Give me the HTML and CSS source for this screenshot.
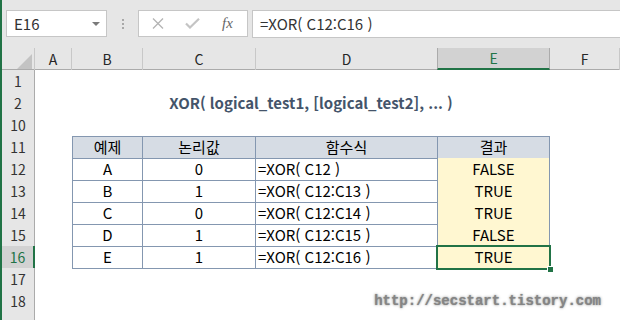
FILE: index.html
```html
<!DOCTYPE html>
<html lang="ko">
<head>
    <meta charset="UTF-8">
    <title>XOR 함수</title>
    <link rel="stylesheet" href="styles.css">
</head>
<body>

<div class="app">
    <div class="toolbar">
        <div class="namebox">
            <span>E16</span>
            <span class="caret"></span>
        </div>
        <div class="grip"><i></i><i></i><i></i></div>
        <div class="fxbox">
            <svg width="12" height="11" viewBox="0 0 12 11"><path d="M1 0.5 L11 10.5 M11 0.5 L1 10.5" stroke="#b4b4b4" stroke-width="1.3" fill="none"/></svg>
            <svg width="15" height="11" viewBox="0 0 15 11"><path d="M1 5.5 L5 9.5 L14 0.8" stroke="#c4c4c4" stroke-width="2.2" fill="none"/></svg>
            <span class="fx">fx</span>
        </div>
        <div class="formula">=XOR( C12:C16 )</div>
    </div>

    <div class="sheet">
        <div class="row colheads">
            <div class="corner"><span></span></div>
            <div class="ch">A</div>
            <div class="ch">B</div>
            <div class="ch">C</div>
            <div class="ch">D</div>
            <div class="ch active">E</div>
            <div class="ch">F</div>
        </div>

        <div class="row">
            <div class="rh">1</div>
        </div>
        <div class="row">
            <div class="rh hidden-after">2</div>
            <div class="title">XOR( logical_test1, [logical_test2], ... )</div>
        </div>
        <div class="row">
            <div class="rh">10</div>
        </div>
        <div class="row">
            <div class="rh">11</div>
            <div class="tc head first">예제</div>
            <div class="tc head">논리값</div>
            <div class="tc head">함수식</div>
            <div class="tc head">결과</div>
        </div>
        <div class="row">
            <div class="rh">12</div>
            <div class="tc first">A</div>
            <div class="tc">0</div>
            <div class="tc left">=XOR( C12 )</div>
            <div class="tc result">FALSE</div>
        </div>
        <div class="row">
            <div class="rh">13</div>
            <div class="tc first">B</div>
            <div class="tc">1</div>
            <div class="tc left">=XOR( C12:C13 )</div>
            <div class="tc result">TRUE</div>
        </div>
        <div class="row">
            <div class="rh">14</div>
            <div class="tc first">C</div>
            <div class="tc">0</div>
            <div class="tc left">=XOR( C12:C14 )</div>
            <div class="tc result">TRUE</div>
        </div>
        <div class="row">
            <div class="rh">15</div>
            <div class="tc first">D</div>
            <div class="tc">1</div>
            <div class="tc left">=XOR( C12:C15 )</div>
            <div class="tc result">FALSE</div>
        </div>
        <div class="row">
            <div class="rh current">16</div>
            <div class="tc first">E</div>
            <div class="tc">1</div>
            <div class="tc left">=XOR( C12:C16 )</div>
            <div class="tc result selected">TRUE</div>
        </div>
        <div class="row">
            <div class="rh">17</div>
        </div>
        <div class="row">
            <div class="rh">18</div>
            <div class="watermark">http://secstart.tistory.com</div>
        </div>
        <div class="row">
            <div class="rh"></div>
        </div>
    </div>
</div>

</body>
</html>
```

FILE: styles.css
```css
body {
    margin: 0;
    font-family: "Noto Sans CJK KR", "Noto Sans", sans-serif;
    background: #fff;
    overflow: hidden;
}

.app {
    width: 618px;
    height: 320px;
    border-left: 2px solid #217346;
    overflow: hidden;
}

/* formula bar */

.toolbar {
    height: 47px;
    background: #e6e6e6;
    display: flex;
    align-items: flex-start;
    padding-top: 10px;
    box-sizing: border-box;
}

.namebox {
    margin-left: 4px;
    width: 101px;
    height: 27px;
    background: #fff;
    border: 1px solid #c6c6c6;
    box-sizing: border-box;
    display: flex;
    align-items: center;
    justify-content: space-between;
    padding: 0 6px 0 7px;
    font-size: 15px;
    color: #333;
}

.caret {
    width: 0;
    height: 0;
    border-left: 4px solid transparent;
    border-right: 4px solid transparent;
    border-top: 4px solid #7a7a7a;
}

.grip {
    width: 31px;
    height: 27px;
    display: flex;
    flex-direction: column;
    align-items: center;
    justify-content: center;
    gap: 2px;
}

.grip i {
    width: 2px;
    height: 2px;
    background: #a8a8a8;
}

.fxbox {
    width: 110px;
    height: 27px;
    background: #fff;
    border: 1px solid #c6c6c6;
    box-sizing: border-box;
    display: flex;
    align-items: center;
    padding-left: 13px;
    gap: 21px;
}

.fx {
    font-family: "Liberation Serif", serif;
    font-style: italic;
    font-size: 15px;
    color: #666;
    margin-left: 1px;
}

.formula {
    flex: 1;
    margin-left: 4px;
    height: 28px;
    background: #fff;
    border: 1px solid #c6c6c6;
    border-right: none;
    box-sizing: border-box;
    padding-left: 7px;
    font-size: 15px;
    line-height: 25px;
    color: #333;
}

/* sheet */

.row {
    display: grid;
    grid-template-columns: 33px 37px 71px 113px 182px 112px 1fr;
    height: 22px;
    font-size: 15px;
}

.colheads {
    background: #e6e6e6;
    border-bottom: 1px solid #ababab;
    height: 23px;
    box-sizing: border-box;
}

.corner {
    position: relative;
    border-right: 1px solid #c8c8c8;
    margin-top: 1px;
}

.corner span {
    position: absolute;
    right: 2px;
    bottom: 1px;
    width: 0;
    height: 0;
    border-left: 15px solid transparent;
    border-bottom: 15px solid #c3c3c3;
}

.ch {
    border-right: 1px solid #c8c8c8;
    margin-top: 1px;
    text-align: center;
    font-size: 14px;
    line-height: 22px;
    color: #262626;
}

.ch.active {
    background: #d2d2d2;
    border-left: 1px solid #ababab;
    border-right: 1px solid #ababab;
    border-bottom: 2px solid #217346;
    margin-left: -1px;
    line-height: 20px;
    color: #217346;
}

.rh {
    grid-column: 1;
    background: #e6e6e6;
    border-right: 1px solid #ababab;
    border-bottom: 1px solid #c8c8c8;
    box-sizing: border-box;
    text-align: center;
    font-size: 14px;
    line-height: 22px;
    color: #333;
}

.rh.hidden-after {
    border-bottom: 3px double #ababab;
}

.rh.current {
    background: #d2d2d2;
    border-right: 2px solid #217346;
    color: #217346;
}

.title {
    grid-column: 3 / 7;
    text-align: center;
    font-weight: bold;
    font-size: 15px;
    line-height: 22px;
    color: #44546a;
}

.tc {
    border-right: 1px solid #8497b0;
    border-bottom: 1px solid #8497b0;
    text-align: center;
    line-height: 21px;
    color: #000;
    white-space: nowrap;
}

.tc.first {
    grid-column: 3;
    border-left: 1px solid #8497b0;
}

.tc.head {
    background: #d6dce4;
    border-top: 1px solid #8497b0;
    line-height: 20px;
}

.tc.left {
    text-align: left;
    padding-left: 2px;
}

.tc.result {
    background: #fff7d1;
}

.tc.selected {
    position: relative;
}

.tc.selected::after {
    content: "";
    position: absolute;
    left: -2px;
    top: -1px;
    right: -2px;
    bottom: -2px;
    border: 2px solid #217346;
}

.tc.selected::before {
    content: "";
    position: absolute;
    right: -5px;
    bottom: -5px;
    width: 5px;
    height: 5px;
    background: #217346;
    border: 1px solid #fff;
    z-index: 1;
}

.watermark {
    grid-column: 5 / 8;
    justify-self: end;
    margin-right: 19px;
    font-family: "Liberation Mono", monospace;
    font-weight: bold;
    font-size: 14px;
    line-height: 22px;
    color: #858585;
    text-shadow: 0 0 3px #999, 0 0 1px #aaa;
}
```
